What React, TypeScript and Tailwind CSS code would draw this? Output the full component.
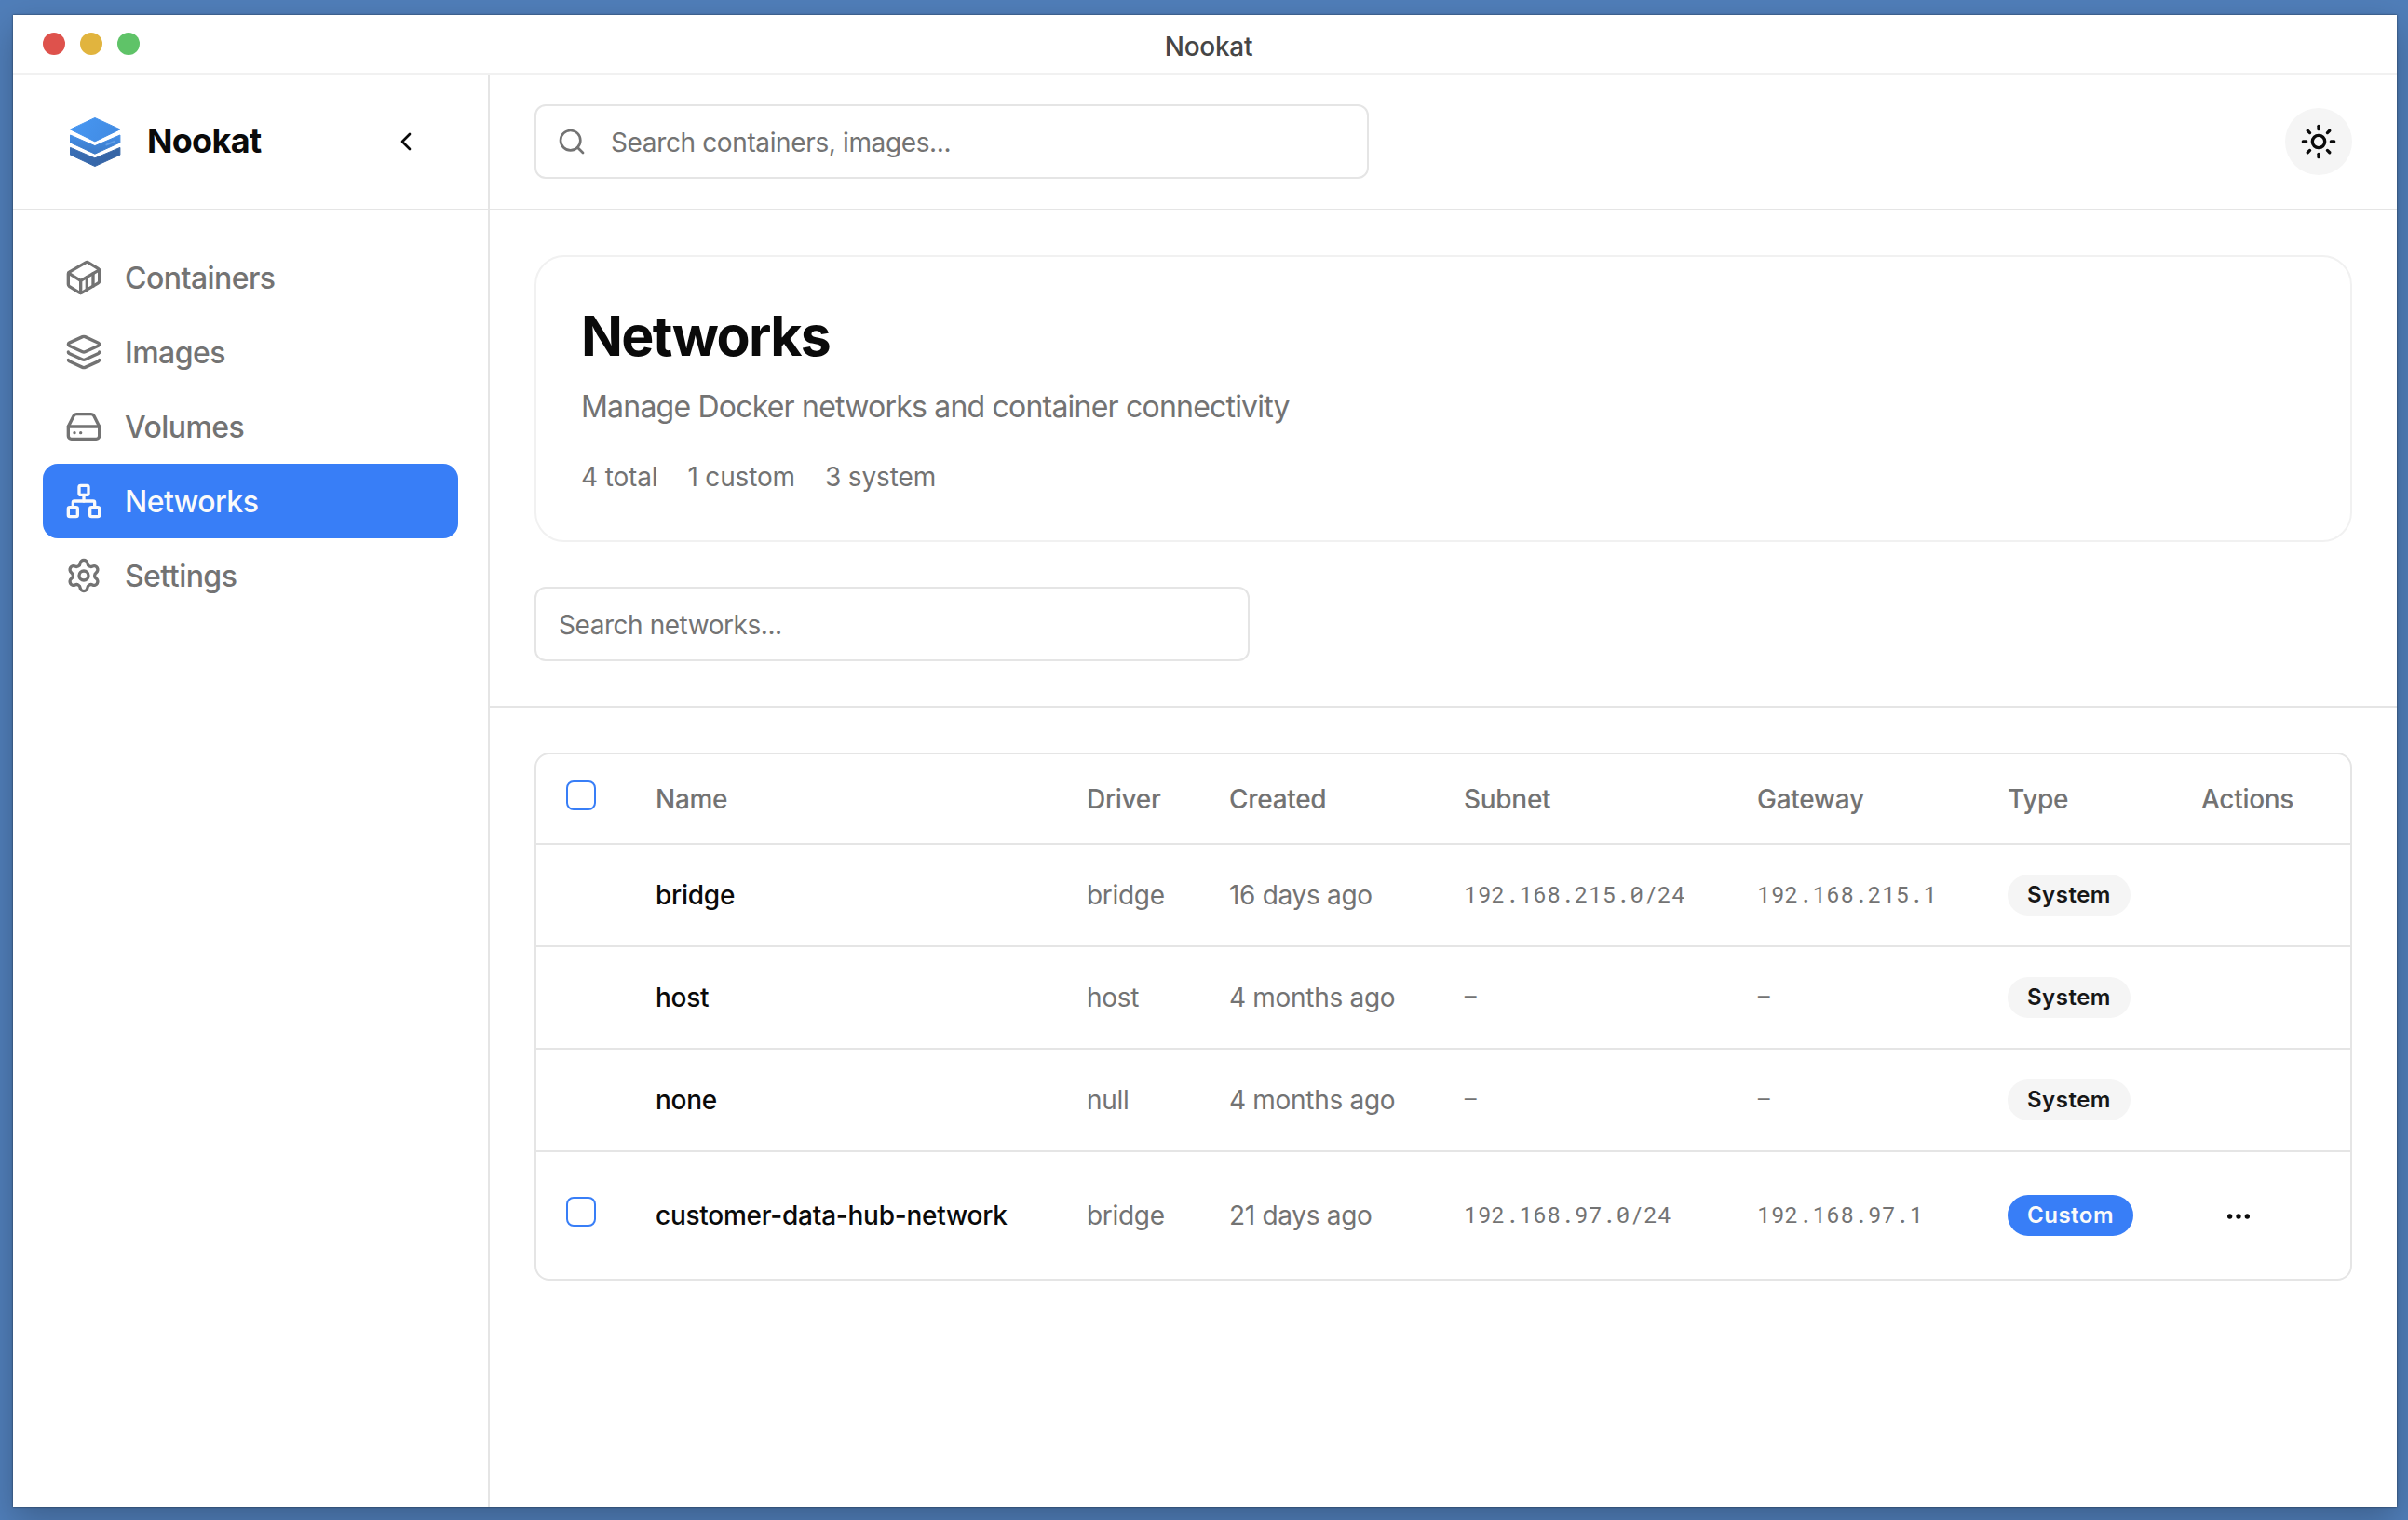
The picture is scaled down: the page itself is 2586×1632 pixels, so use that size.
import React from "react";
import {
  ChevronLeft,
  Container,
  Ellipsis,
  HardDrive,
  Layers,
  Network,
  Search,
  Settings,
  Sun,
  type LucideIcon,
} from "lucide-react";

type NavItem = { label: string; icon: LucideIcon; active?: boolean };

const navItems: NavItem[] = [
  { label: "Containers", icon: Container },
  { label: "Images", icon: Layers },
  { label: "Volumes", icon: HardDrive },
  { label: "Networks", icon: Network, active: true },
  { label: "Settings", icon: Settings },
];

type NetworkRow = {
  name: string;
  driver: string;
  created: string;
  subnet: string;
  gateway: string;
  custom?: boolean;
};

const rows: NetworkRow[] = [
  { name: "bridge", driver: "bridge", created: "16 days ago", subnet: "192.168.215.0/24", gateway: "192.168.215.1" },
  { name: "host", driver: "host", created: "4 months ago", subnet: "–", gateway: "–" },
  { name: "none", driver: "null", created: "4 months ago", subnet: "–", gateway: "–" },
  {
    name: "customer-data-hub-network",
    driver: "bridge",
    created: "21 days ago",
    subnet: "192.168.97.0/24",
    gateway: "192.168.97.1",
    custom: true,
  },
];

const columns = "grid grid-cols-[128px_463px_153px_252px_315px_269px_208px_1fr] items-center";

function Logo() {
  return (
    <svg className="h-16 w-16 shrink-0" viewBox="0 0 64 64" fill="none">
      <defs>
        <linearGradient id="top" x1="10" y1="6" x2="54" y2="32" gradientUnits="userSpaceOnUse">
          <stop stopColor="#4797f2" />
          <stop offset="1" stopColor="#418ae2" />
        </linearGradient>
        <linearGradient id="mid" x1="32" y1="24" x2="32" y2="46" gradientUnits="userSpaceOnUse">
          <stop stopColor="#448fe8" />
          <stop offset="1" stopColor="#3b79c6" />
        </linearGradient>
        <linearGradient id="low" x1="5" y1="38" x2="40" y2="59" gradientUnits="userSpaceOnUse">
          <stop stopColor="#3a6fb6" />
          <stop offset="1" stopColor="#3665a6" />
        </linearGradient>
      </defs>
      <g strokeWidth="1" strokeLinejoin="round">
        <path d="M31.9 6.5 58.9 18.9 31.9 31.9 5.5 18.9Z" fill="url(#top)" stroke="url(#top)" />
        <path d="M5.5 25 31.9 36.6 58.9 25V33L31.9 45.2 5.5 33Z" fill="url(#mid)" stroke="url(#mid)" />
        <path d="M5.5 38.4 31.9 49.8 58.9 38.4V46.2L31.9 58.5 5.5 46.2Z" fill="url(#low)" stroke="url(#low)" />
      </g>
      <path d="M44.4 35.4 52.8 31.8" stroke="#629fe6" strokeWidth="2" strokeLinecap="round" />
    </svg>
  );
}

function Checkbox() {
  return <button aria-label="Select" className="mb-2 block h-8 w-8 rounded-lg border-2 border-[#387ef7] bg-white" />;
}

function TitleBar() {
  return (
    <div className="grid h-16 shrink-0 grid-cols-3 items-center border-b-2 border-[#f1f1f1] px-8">
      <div className="flex gap-4">
        <span className="h-6 w-6 rounded-full bg-[#de524c]" />
        <span className="h-6 w-6 rounded-full bg-[#e1b43e]" />
        <span className="h-6 w-6 rounded-full bg-[#5fc368]" />
      </div>
      <div className="pt-[5px] pl-2 text-center text-[28px] leading-9 font-medium tracking-[-0.3px] text-[#464646]">
        Nookat
      </div>
    </div>
  );
}

function Sidebar() {
  return (
    <aside className="flex w-[512px] shrink-0 flex-col border-r-2 border-[#e5e5e5]">
      <div className="flex h-[146px] shrink-0 items-center gap-6 border-b-2 border-[#e5e5e5] pr-[72px] pl-14">
        <Logo />
        <span className="pb-0.5 text-[36px] font-bold tracking-[-0.7px]">Nookat</span>
        <ChevronLeft className="ml-auto h-8 w-8" />
      </div>
      <nav className="flex flex-col px-8 pt-8">
        {navItems.map(({ label, icon: Icon, active }) => (
          <a
            key={label}
            className={`flex h-20 items-center gap-6 rounded-2xl px-6 text-[32px] font-medium tracking-[-0.55px] ${
              active ? "bg-[#387ef7] text-[#fafafa]" : "text-[#737373]"
            }`}
          >
            <Icon className="h-10 w-10 shrink-0" />
            <span className="pt-px">{label}</span>
          </a>
        ))}
      </nav>
    </aside>
  );
}

function Header() {
  return (
    <header className="flex h-[146px] shrink-0 items-center justify-between border-b-2 border-[#e5e5e5] px-12">
      <div className="flex h-20 w-[896px] items-center gap-[26px] rounded-xl border-2 border-[#e5e5e5] px-[22px] text-[#737373]">
        <Search className="h-8 w-8 shrink-0" />
        <span className="pt-0.5 text-[28px] tracking-[-0.37px]">Search containers, images...</span>
      </div>
      <button aria-label="Theme" className="flex h-[72px] w-[72px] items-center justify-center rounded-full bg-[#f5f5f5]">
        <Sun className="h-10 w-10" />
      </button>
    </header>
  );
}

function Summary() {
  return (
    <section className="mx-12 mt-12 h-[308px] shrink-0 rounded-[32px] border-2 border-[#f1f1f1] p-12 text-[#737373]">
      <h1 className="h-[72px] pt-px text-[59px] leading-[72px] font-bold tracking-[-1.7px] text-[#0a0a0a]">Networks</h1>
      <p className="mt-4 h-12 pt-px text-[32px] leading-[48px] tracking-[-0.79px]">
        Manage Docker networks and container connectivity
      </p>
      <div className="mt-8 flex gap-8 text-[28px] leading-10 tracking-[-0.15px]">
        <span>4 total</span>
        <span>1 custom</span>
        <span>3 system</span>
      </div>
    </section>
  );
}

function NetworkTable() {
  return (
    <section className="mx-12 mt-12 shrink-0 rounded-2xl border-2 border-[#e5e5e5] text-[28px] text-[#737373]">
      <div className={`${columns} h-[97px] border-b-2 border-[#e5e5e5] font-medium tracking-[-0.3px]`}>
        <div className="pl-8">
          <Checkbox />
        </div>
        <span>Name</span>
        <span>Driver</span>
        <span>Created</span>
        <span>Subnet</span>
        <span>Gateway</span>
        <span>Type</span>
        <span>Actions</span>
      </div>
      {rows.map((row) => (
        <div
          key={row.name}
          className={`${columns} tracking-[-0.3px] ${row.custom ? "h-[136px]" : "h-[110px] border-b-2 border-[#e5e5e5]"}`}
        >
          <div className="pl-8">{row.custom && <Checkbox />}</div>
          <span className="font-medium tracking-[-0.25px] text-[#0a0a0a]">{row.name}</span>
          <span>{row.driver}</span>
          <span>{row.created}</span>
          <span className="pb-0.5 font-['Roboto_Mono','Liberation_Mono',monospace] text-[24px] tracking-[0.48px]">
            {row.subnet}
          </span>
          <span className="pb-0.5 font-['Roboto_Mono','Liberation_Mono',monospace] text-[24px] tracking-[0.48px]">
            {row.gateway}
          </span>
          <div className="flex">
            <span
              className={`flex h-11 items-center rounded-full px-[21px] text-[24px] leading-8 font-semibold tracking-[0.5px] ${
                row.custom ? "bg-[#387ef7] text-[#fafafa]" : "bg-[#f5f5f5] text-[#171717]"
              }`}
            >
              {row.custom ? "Custom" : "System"}
            </span>
          </div>
          <div className="pt-0.5 pl-6 text-[#0a0a0a]">{row.custom && <Ellipsis className="h-8 w-8" />}</div>
        </div>
      ))}
    </section>
  );
}

export default function App() {
  return (
    <div className="h-[1632px] w-[2586px] overflow-hidden bg-[#507eb9] pt-4 pl-3.5 font-['Inter','Liberation_Sans',sans-serif]">
      <div className="flex h-[1602px] w-[2560px] flex-col bg-white text-[#0a0a0a] shadow-[0_0_2px_0_rgba(0,0,0,0.6),0_14px_36px_0_rgba(0,0,0,0.24)]">
        <TitleBar />
        <div className="flex min-h-0 flex-1">
          <Sidebar />
          <main className="flex min-w-0 flex-1 flex-col">
            <Header />
            <Summary />
            <div className="shrink-0 border-b-2 border-[#e5e5e5] px-12 py-12">
              <div className="flex h-20 w-[768px] items-center rounded-xl border-2 border-[#e5e5e5] px-6 pt-0.5 text-[28px] tracking-[-0.45px] text-[#737373]">
                Search networks...
              </div>
            </div>
            <NetworkTable />
          </main>
        </div>
      </div>
    </div>
  );
}
